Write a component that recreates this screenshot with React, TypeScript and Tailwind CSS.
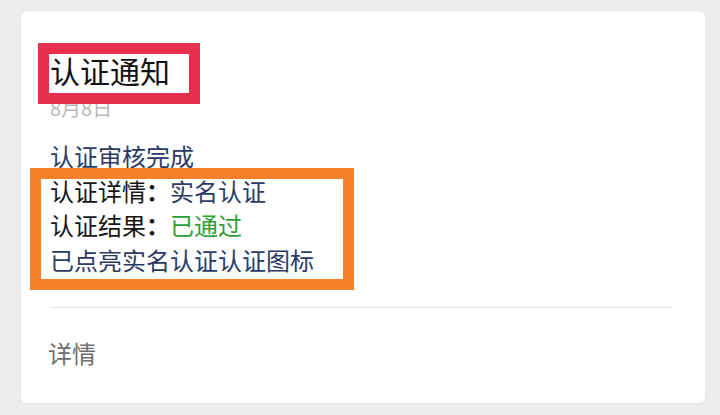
import React from "react";

const font = { fontFamily: '"Noto Sans CJK SC", "Noto Sans", sans-serif' };

export default function App() {
  return (
    <div
      className="w-[720px] h-[415px] bg-[#ececec] pt-[11px] pl-[21px] pr-[15px] pb-[12px]"
      style={font}
    >
      <div className="relative h-[392px] rounded-[6px] bg-white pl-[29px] pr-[32px] pt-[44px] shadow-[0_0_3px_rgba(0,0,0,0.04)]">
        <div className="text-[30px] leading-[30px] text-[#111111]">认证通知</div>
        <div className="mt-[13px] text-[20px] leading-[20px] text-[#b9b9b9]">8月8日</div>
        <div className="mt-[21px] flex flex-col text-[24px] leading-[34.5px]">
          <div className="text-[#2c3a63]">认证审核完成</div>
          <div className="text-[#151515]">
            认证详情<span className="font-bold">：</span>
            <span className="text-[#2c3a63]">实名认证</span>
          </div>
          <div className="text-[#151515]">
            认证结果<span className="font-bold">：</span>
            <span className="text-[#2e9f36]">已通过</span>
          </div>
          <div className="text-[#2c3a63]">已点亮实名认证认证图标</div>
        </div>
        <div className="mt-[30px] mr-[1px] h-px bg-[#e4e4e4]" />
        <div className="mt-[33px] -ml-[2px] text-[24px] leading-[24px] text-[#6e6e6e]">详情</div>

        <div className="pointer-events-none absolute left-[17px] top-[32px] h-[61px] w-[162px] border-[11px] border-[#e8304d]" />
        <div className="pointer-events-none absolute left-[9px] top-[157px] h-[122px] w-[324px] border-[11px] border-[#f7812a]" />
      </div>
    </div>
  );
}
